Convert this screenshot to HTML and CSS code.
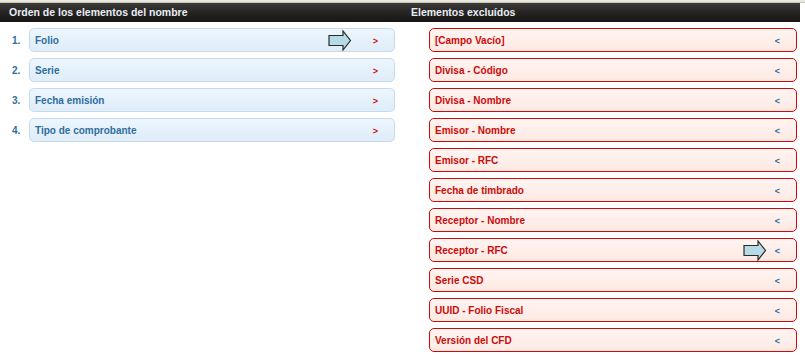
FILE: index.html
```html
<!doctype html>
<html lang="es">
  <head>
    <meta charset="UTF-8" />
    <title>Nombre de archivo</title>
    <link rel="stylesheet" href="styles.css">
  </head>
  <body>
    <div class="topline"></div>
    <div class="columns">
      <div class="column">
        <div class="header">Orden de los elementos del nombre</div>
        <ol class="list">
          <li class="row">
            <span class="num">1.</span>
            <div class="item included">
              <span>Folio</span>
              <svg class="arrow" width="24" height="21" viewBox="0 0 24 21"><path d="M1 5.5h14V1l7.5 9.5L15 20v-4.5H1z" fill="#b6dbe6" stroke="#2a2a2a" stroke-width="1.2"/></svg>
              <span class="move">&gt;</span>
            </div>
          </li>
          <li class="row">
            <span class="num">2.</span>
            <div class="item included"><span>Serie</span><span class="move">&gt;</span></div>
          </li>
          <li class="row">
            <span class="num">3.</span>
            <div class="item included"><span>Fecha emisión</span><span class="move">&gt;</span></div>
          </li>
          <li class="row">
            <span class="num">4.</span>
            <div class="item included"><span>Tipo de comprobante</span><span class="move">&gt;</span></div>
          </li>
        </ol>
      </div>
      <div class="column">
        <div class="header">Elementos excluídos</div>
        <ul class="list excluded-list">
          <li class="item excluded"><span>[Campo Vacío]</span><span class="move">&lt;</span></li>
          <li class="item excluded"><span>Divisa - Código</span><span class="move">&lt;</span></li>
          <li class="item excluded"><span>Divisa - Nombre</span><span class="move">&lt;</span></li>
          <li class="item excluded"><span>Emisor - Nombre</span><span class="move">&lt;</span></li>
          <li class="item excluded"><span>Emisor - RFC</span><span class="move">&lt;</span></li>
          <li class="item excluded"><span>Fecha de timbrado</span><span class="move">&lt;</span></li>
          <li class="item excluded"><span>Receptor - Nombre</span><span class="move">&lt;</span></li>
          <li class="item excluded">
            <span>Receptor - RFC</span>
            <svg class="arrow" width="24" height="21" viewBox="0 0 24 21"><path d="M1 5.5h14V1l7.5 9.5L15 20v-4.5H1z" fill="#b6dbe6" stroke="#2a2a2a" stroke-width="1.2"/></svg>
            <span class="move">&lt;</span>
          </li>
          <li class="item excluded"><span>Serie CSD</span><span class="move">&lt;</span></li>
          <li class="item excluded"><span>UUID - Folio Fiscal</span><span class="move">&lt;</span></li>
          <li class="item excluded"><span>Versión del CFD</span><span class="move">&lt;</span></li>
        </ul>
      </div>
    </div>
  </body>
</html>
```

FILE: styles.css
```css
* {
  margin: 0;
  padding: 0;
  box-sizing: border-box;
}

body {
  font-family: "Liberation Sans", Arial, sans-serif;
  font-size: 10px;
  background: #fff;
  width: 805px;
  height: 355px;
  overflow: hidden;
}

.topline {
  height: 3px;
  background: #e9e8df;
  border-bottom: 1px solid #c9c7b8;
}

.columns {
  display: flex;
}

.column {
  width: 402px;
}

.column:last-child {
  width: 403px;
}

.header {
  height: 19px;
  line-height: 18px;
  padding-left: 9px;
  color: #e8eef4;
  font-weight: bold;
  font-size: 10.5px;
  background: linear-gradient(#3e3c3a 0%, #262422 50%, #171615 100%);
}

.column:last-child .header {
  margin-right: 5px;
}

.list {
  list-style: none;
  padding-top: 6px;
}

.row {
  display: flex;
  align-items: center;
  margin-bottom: 6px;
}

.num {
  width: 29px;
  padding-left: 12px;
  color: #2e6e9e;
  font-weight: bold;
}

.item {
  position: relative;
  display: flex;
  align-items: center;
  justify-content: space-between;
  height: 24px;
  padding: 1px 16px 0 5px;
  border-radius: 5px;
  font-weight: bold;
}

.included {
  width: 366px;
  color: #2e6e9e;
  border: 1px solid #c5dbec;
  background: linear-gradient(#eef6fd 0%, #e5f1fb 50%, #dfedf9 100%);
}

.excluded-list {
  padding-left: 27px;
}

.excluded {
  width: 368px;
  margin-bottom: 6px;
  color: #cd0a0a;
  border: 1px solid #cd0a0a;
  background: linear-gradient(#fef4f1 0%, #feefea 50%, #fde9e3 100%);
}

.move {
  font-size: 9px;
}

.included .move {
  color: #cd0a0a;
}

.excluded .move {
  color: #2e6e9e;
}

.arrow {
  position: absolute;
  top: 1px;
  right: 42px;
}

.excluded .arrow {
  right: 29px;
}
```
